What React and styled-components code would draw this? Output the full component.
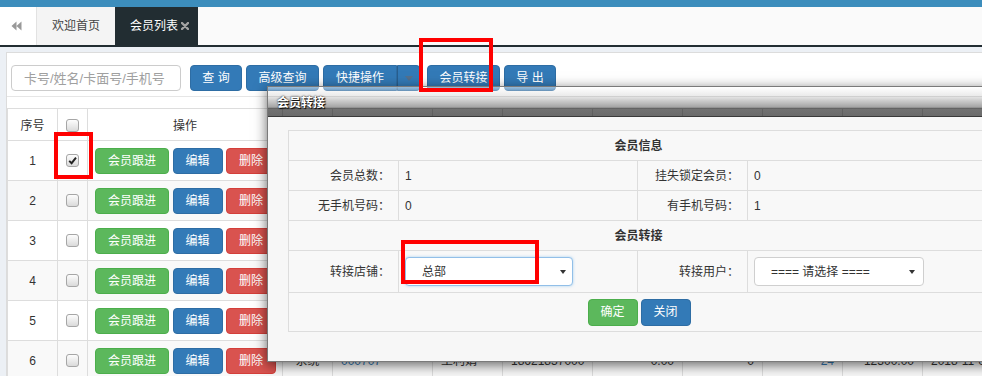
import React from 'react';
import styled, { createGlobalStyle, css } from 'styled-components';

const FONT = `"Liberation Sans", "Noto Sans CJK SC", sans-serif`;

const Global = createGlobalStyle`
  html, body { margin: 0; padding: 0; width: 982px; height: 376px; overflow: hidden; background: #ecf0f5; }
  body { font-family: ${FONT}; font-size: 12px; color: #333; }
  *, *::before, *::after { box-sizing: border-box; }
`;

const Page = styled.div`
  position: relative;
  width: 982px;
  height: 376px;
  overflow: hidden;
  background: #ecf0f5;
`;

const TopBar = styled.div`
  height: 7px;
  background: #3c8dbc;
`;

const TabBar = styled.div`
  display: flex;
  height: 38px;
  background: #fafafa;
`;

const BackTab = styled.div`
  width: 37px;
  display: flex;
  align-items: center;
  justify-content: center;
  background: #fff;
  border-right: 1px solid #e2e2e2;
  padding-right: 4px;
`;

const Tab = styled.div`
  display: flex;
  align-items: center;
  justify-content: center;
  gap: 3px;
  width: ${p => p.$w}px;
  padding-left: ${p => (p.$active ? '6px' : '0')};
  background: ${p => (p.$active ? '#222d32' : '#f4f4f4')};
  color: ${p => (p.$active ? '#fff' : '#444')};
  font-size: 12px;
  line-height: 1;
`;

const TabLine = styled.div`
  height: 2px;
  background: #222d32;
`;

const Content = styled.div`
  padding: 5px 0 0 6px;
`;

const Panel = styled.div`
  width: 976px;
  height: 324px;
  overflow: hidden;
  background: #fff;
  border-top: 1px solid #dcdcdc;
  border-left: 1px solid #dcdcdc;
`;

const Toolbar = styled.div`
  display: flex;
  align-items: center;
  height: 44px;
  padding: 12px 0 5px 4px;
  border-bottom: 1px solid #e6e6e6;
`;

const Search = styled.input`
  box-sizing: border-box;
  flex: none;
  width: 170px;
  height: 26px;
  margin: 0 9px 0 0;
  border: 1px solid #ccc;
  border-radius: 4px;
  padding: 0 0 0 12px;
  font-family: ${FONT};
  font-size: 13px;
  color: #333;
  outline: none;
  &::placeholder { color: #a0a0a0; }
`;

const palette = {
  primary: { bg: '#337ab7', bd: '#2e6da4' },
  success: { bg: '#5cb85c', bd: '#4cae4c' },
  danger: { bg: '#d9534f', bd: '#d43f3a' },
};

const Btn = styled.button`
  flex: none;
  height: ${p => p.$h || 26}px;
  width: ${p => (p.$w ? `${p.$w}px` : 'auto')};
  padding: 0 ${p => p.$px ?? 12}px;
  margin: 0 ${p => p.$mr ?? 4}px 0 0;
  border: 1px solid ${p => palette[p.$v || 'primary'].bd};
  background: ${p => palette[p.$v || 'primary'].bg};
  color: #fff;
  border-radius: 4px;
  font-family: ${FONT};
  font-size: 12px;
  line-height: 1;
  display: inline-flex;
  align-items: center;
  justify-content: center;
  white-space: nowrap;
  cursor: pointer;
  ${p => p.$left && css`border-top-right-radius: 0; border-bottom-right-radius: 0; margin-right: 0;`}
  ${p => p.$right && css`border-top-left-radius: 0; border-bottom-left-radius: 0; border-left-color: #285e8e;`}
`;

const Caret = styled.span`
  display: inline-block;
  width: 0;
  height: 0;
  border-left: ${p => p.$s || 4}px solid transparent;
  border-right: ${p => p.$s || 4}px solid transparent;
  border-top: ${p => (p.$s || 4) + 1}px solid ${p => p.$c || '#333'};
`;

const Grid = styled.table`
  margin-top: 11px;
  border-collapse: collapse;
  table-layout: fixed;
  width: 1016px;
  background: #fff;
`;

const HeadRow = styled.tr`
  height: 32px;
`;

const Row = styled.tr`
  height: 40px;
  background: ${p => (p.$striped ? '#f9f9f9' : '#fff')};
`;

const Th = styled.th`
  border: 1px solid #ddd;
  font-weight: normal;
  font-size: 12px;
  color: #333;
  text-align: center;
  padding: 0;
  white-space: nowrap;
  overflow: hidden;
`;

const Td = styled.td`
  border: 1px solid #ddd;
  padding: 0 8px;
  font-size: 12px;
  line-height: 1;
  white-space: nowrap;
  overflow: hidden;
  text-align: ${p => p.$align || 'left'};
  color: ${p => (p.$link ? '#337ab7' : '#333')};
`;

const OpCell = styled.div`
  display: flex;
  align-items: center;
  gap: 3.5px;
`;

const Check = styled.span`
  display: inline-flex;
  align-items: center;
  justify-content: center;
  width: 13px;
  height: 13px;
  border: 1px solid #a6a6a6;
  border-radius: 3px;
  background: linear-gradient(#fdfdfd, #dadada);
  vertical-align: middle;
`;

const Dialog = styled.div`
  position: absolute;
  left: 267px;
  top: 86px;
  width: 742px;
  border: 1px solid #7a7a7a;
  box-shadow: 0 3px 12px rgba(0, 0, 0, 0.6);
`;

const DialogHead = styled.div`
  height: 30px;
  display: flex;
  align-items: center;
  padding-left: 9px;
  border-bottom: 1px solid #3a3a3a;
  background: linear-gradient(
    to bottom,
    rgba(255, 255, 255, 0.5) 0%,
    rgba(0, 0, 0, 0.08) 30%,
    rgba(0, 0, 0, 0.36) 70%,
    rgba(0, 0, 0, 0.55) 72%,
    rgba(0, 0, 0, 0.58) 100%
  );
  color: #fff;
  font-weight: bold;
  font-size: 12px;
  text-shadow: 0 0 2px #000, 1px 1px 1px #000;
`;

const DialogBody = styled.div`
  background: #f7f7f7;
  padding: 13px 20px 29px 20px;
`;

const InfoTable = styled.table`
  width: 700px;
  border-collapse: collapse;
  table-layout: fixed;
  background: #f8f8f8;
`;

const InfoRow = styled.tr`
  height: ${p => p.$h || 30}px;
`;

const Section = styled.td`
  border: 1px solid #ddd;
  text-align: center;
  font-weight: bold;
  font-size: 12px;
  line-height: 1;
  color: #333;
  padding: 0;
`;

const Label = styled.td`
  border: 1px solid #ddd;
  text-align: right;
  padding: 0 8px 0 0;
  font-size: 12px;
  line-height: 1;
  color: #333;
`;

const Value = styled.td`
  border: 1px solid #ddd;
  padding: 0 0 0 6px;
  font-size: 12px;
  line-height: 1;
  color: #333;
`;

const ActionCell = styled.td`
  border: 1px solid #ddd;
  padding: 0;
`;

const Actions = styled.div`
  display: flex;
  justify-content: center;
  gap: 3px;
  padding-left: 1px;
`;

const FakeSelect = styled.div`
  display: flex;
  align-items: center;
  justify-content: space-between;
  width: ${p => p.$w}px;
  height: 29px;
  padding: 0 ${p => p.$pr}px 0 16px;
  background: #fff;
  border: 1px solid ${p => (p.$focus ? '#92bfe8' : '#cfcfcf')};
  border-radius: 4px;
  box-shadow: ${p => (p.$focus ? '0 0 3px rgba(102, 175, 233, 0.55)' : 'none')};
  font-size: 12px;
  line-height: 1;
  color: #333;
`;

const Mark = styled.div`
  position: absolute;
  left: ${p => p.$x}px;
  top: ${p => p.$y}px;
  width: ${p => p.$w}px;
  height: ${p => p.$h}px;
  border: 4px solid #ff0000;
  pointer-events: none;
`;

const BackIcon = () => (
  <svg width="11" height="10" viewBox="0 0 11 10">
    <path d="M5.5 0.5 L0.5 5 L5.5 9.5 Z M10.5 0.5 L5.5 5 L10.5 9.5 Z" fill="#999" />
  </svg>
);

const CloseIcon = () => (
  <svg width="8" height="8" viewBox="0 0 8 8">
    <path d="M1 1 L7 7 M7 1 L1 7" stroke="#a3a3a3" strokeWidth="2.4" strokeLinecap="round" />
  </svg>
);

const Tick = () => (
  <svg width="9" height="9" viewBox="0 0 9 9">
    <path d="M1.2 4.8 L3.6 7.2 L8 1.6" stroke="#222" strokeWidth="1.9" fill="none" />
  </svg>
);

const rows = [
  ['系统', '000702', '李晓梅', '13812345678', '0.00', '0', '3', '860.00', '2018-11-02'],
  ['系统', '000703', '张伟', '13912345679', '120.00', '35', '8', '2150.00', '2018-11-03'],
  ['系统', '000704', '刘洋', '15012345670', '0.00', '0', '1', '99.00', '2018-11-04'],
  ['系统', '000705', '陈静', '18612345671', '50.00', '12', '5', '1320.00', '2018-11-05'],
  ['系统', '000706', '赵磊', '13712345672', '0.00', '0', '2', '430.00', '2018-11-06'],
  ['系统', '000707', '王利娟', '18621837000', '0.00', '0', '24', '12300.00', '2018-11-07'],
];

const cols = [50, 30, 195, 50, 100, 70, 90, 90, 80, 80, 80, 100];
const heads = ['序号', '', '操作', '来源', '卡号', '姓名', '手机号', '余额', '积分', '消费次数', '消费金额', '注册时间'];

export default function App() {
  return (
    <>
      <Global />
      <Page>
        <TopBar />
        <TabBar>
          <BackTab><BackIcon /></BackTab>
          <Tab $w={78}>欢迎首页</Tab>
          <Tab $w={83} $active>会员列表<CloseIcon /></Tab>
        </TabBar>
        <TabLine />
        <Content>
          <Panel>
            <Toolbar>
              <Search placeholder="卡号/姓名/卡面号/手机号" />
              <Btn $w={52} $px={0}>查&nbsp;询</Btn>
              <Btn $w={73} $px={0}>高级查询</Btn>
              <Btn $left $w={74} $px={0}>快捷操作</Btn>
              <Btn $right $w={23} $px={0} $mr={7}><Caret $c="#55708c" /></Btn>
              <Btn $w={73} $px={0}>会员转接</Btn>
              <Btn $w={52} $px={0}>导&nbsp;出</Btn>
            </Toolbar>
            <Grid>
              <colgroup>
                {cols.map((w, i) => <col key={i} style={{ width: w }} />)}
              </colgroup>
              <thead>
                <HeadRow>
                  {heads.map((h, i) => (
                    <Th key={i}>{i === 1 ? <Check /> : h}</Th>
                  ))}
                </HeadRow>
              </thead>
              <tbody>
                {rows.map((r, i) => (
                  <Row key={i} $striped={i % 2 === 1}>
                    <Td $align="center">{i + 1}</Td>
                    <Td $align="center" style={{ padding: 0 }}>
                      <Check>{i === 0 && <Tick />}</Check>
                    </Td>
                    <Td style={{ paddingLeft: 7 }}>
                      <OpCell>
                        <Btn $v="success" $w={74} $mr={0} $px={0}>会员跟进</Btn>
                        <Btn $w={50} $mr={0} $px={0}>编辑</Btn>
                        <Btn $v="danger" $w={50} $mr={0} $px={0}>删除</Btn>
                      </OpCell>
                    </Td>
                    <Td $align="center">{r[0]}</Td>
                    <Td $link>{r[1]}</Td>
                    <Td>{r[2]}</Td>
                    <Td>{r[3]}</Td>
                    <Td $align="right">{r[4]}</Td>
                    <Td $align="right">{r[5]}</Td>
                    <Td $align="right" $link>{r[6]}</Td>
                    <Td $align="right">{r[7]}</Td>
                    <Td>{r[8]}</Td>
                  </Row>
                ))}
              </tbody>
            </Grid>
          </Panel>
        </Content>

        <Dialog>
          <DialogHead>会员转接</DialogHead>
          <DialogBody>
            <InfoTable>
              <colgroup>
                <col style={{ width: 110 }} />
                <col style={{ width: 239 }} />
                <col style={{ width: 110 }} />
                <col style={{ width: 241 }} />
              </colgroup>
              <tbody>
                <InfoRow><Section colSpan={4}>会员信息</Section></InfoRow>
                <InfoRow>
                  <Label>会员总数：</Label><Value>1</Value>
                  <Label>挂失锁定会员：</Label><Value>0</Value>
                </InfoRow>
                <InfoRow>
                  <Label>无手机号码：</Label><Value>0</Value>
                  <Label>有手机号码：</Label><Value>1</Value>
                </InfoRow>
                <InfoRow><Section colSpan={4}>会员转接</Section></InfoRow>
                <InfoRow $h={42}>
                  <Label>转接店铺：</Label>
                  <Value>
                    <FakeSelect $w={168} $pr={6} $focus>总部<Caret $s={3} /></FakeSelect>
                  </Value>
                  <Label>转接用户：</Label>
                  <Value>
                    <FakeSelect $w={170} $pr={8}>==== 请选择 ====<Caret $s={3} /></FakeSelect>
                  </Value>
                </InfoRow>
                <InfoRow $h={39}>
                  <ActionCell colSpan={4}>
                    <Actions>
                      <Btn $v="success" $w={50} $h={27} $mr={0} $px={0}>确定</Btn>
                      <Btn $w={50} $h={27} $mr={0} $px={0}>关闭</Btn>
                    </Actions>
                  </ActionCell>
                </InfoRow>
              </tbody>
            </InfoTable>
          </DialogBody>
        </Dialog>

        <Mark $x={419} $y={38} $w={74} $h={54} />
        <Mark $x={54} $y={132} $w={39} $h={47} />
        <Mark $x={401} $y={240} $w={138} $h={44} />
      </Page>
    </>
  );
}
